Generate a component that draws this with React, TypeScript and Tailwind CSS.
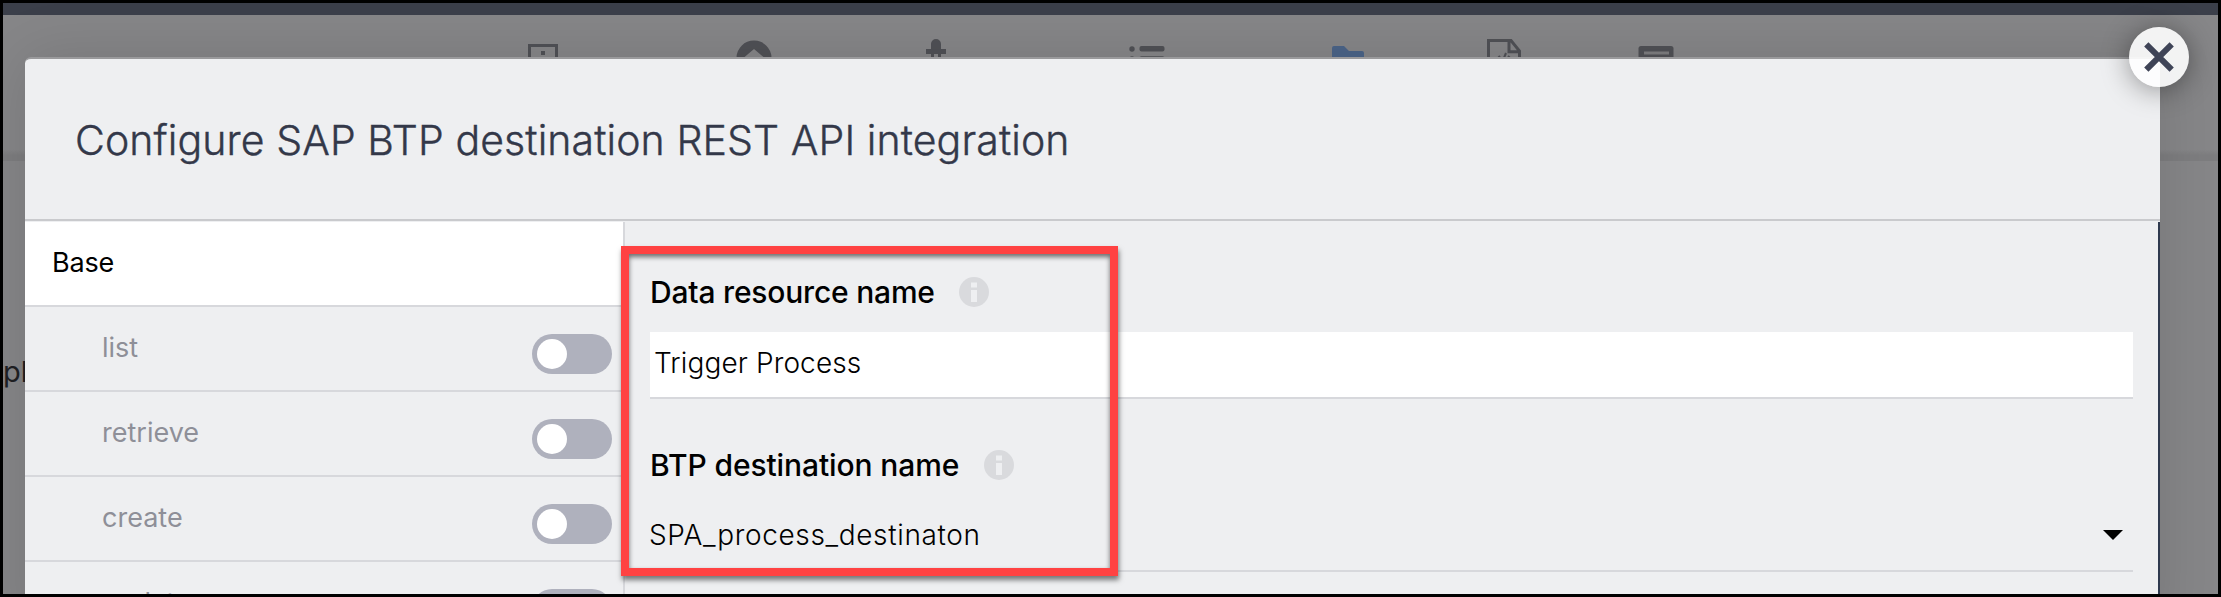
import React from "react";

function Toggle() {
  return (
    <span className="mt-[11px] flex h-10 w-20 shrink-0 items-center rounded-full bg-[#afb1bd] pl-[5px]">
      <span className="h-[30px] w-[30px] rounded-full bg-white" />
    </span>
  );
}

function InfoIcon() {
  return (
    <svg width="30" height="30" viewBox="0 0 30 30" className="-mt-px shrink-0">
      <circle cx="15" cy="15" r="15" fill="#d9dadd" />
      <rect x="12" y="5.5" width="6" height="5" fill="#eeeff1" />
      <rect x="12" y="13" width="6" height="12" fill="#eeeff1" />
    </svg>
  );
}

function ToolbarIcons() {
  return (
    <svg width="1160" height="36" viewBox="525 30 1160 36" className="ml-[522px] mt-[15px] shrink-0" fill="#505156">
      <path d="M529.5 66V45.5H556.5V66" fill="none" stroke="#505156" strokeWidth="3" />
      <rect x="541" y="51" width="4" height="4" />
      <path d="M736.5 58a17.5 17.5 0 0 1 35 0v2h-4.5L754 49l-13 11h-4.5z" />
      <path d="M931 49v-5a5 5 0 0 1 10 0v5h5v5h-5v10h-3V54h-4v10h-3V54h-5v-5z" />
      <circle cx="1132" cy="49" r="2.7" />
      <rect x="1139.5" y="46" width="25" height="5.6" rx="2" />
      <circle cx="1132" cy="59" r="2.7" />
      <rect x="1139.5" y="56.3" width="25" height="5.6" rx="2" />
      <path d="M1332 66V48q0-2 2-2h10l5 5h13q2 0 2 2v13z" fill="#4b6488" />
      <path d="M1488.5 66V40.5H1511L1519.5 51V66M1509 40.5V51.8H1520" fill="none" stroke="#505156" strokeWidth="3" />
      <path d="M1497 59l3-3M1503.5 59l2.5-6M1508 56l2 2" fill="none" stroke="#505156" strokeWidth="2" />
      <path d="M1638.5 66V48.5q0-2.5 2.5-2.5h30q2.5 0 2.5 2.5V66z" />
      <rect x="1644" y="51.5" width="25" height="3" fill="#7e7e80" />
    </svg>
  );
}

const operations = ["list", "retrieve", "create", "update"];

export default function App() {
  return (
    <div className="relative flex h-[597px] w-[2221px] flex-col overflow-hidden border-[3px] border-black bg-[#868688] font-['Inter',sans-serif] text-black">
      <div className="h-3 shrink-0 bg-[#3b3f4a]" />
      <div className="flex h-[146px] shrink-0 flex-col bg-[linear-gradient(to_bottom,transparent_92%,#7d7d7f_96%)]">
        <ToolbarIcons />
      </div>
      <div className="pt-[191px]">
        <div className="text-[29px] leading-[40px] text-[#1f2023]">pl</div>
      </div>

      <section className="absolute left-[22px] top-[54px] flex h-[580px] w-[2135px] flex-col overflow-hidden rounded-t-md border-t-2 border-[#9a9a9c] bg-[#eeeff1] shadow-[0_0_60px_rgba(0,0,0,0.13)]">
        <header className="flex h-[162px] shrink-0 items-center border-b-2 border-[#c9cacd] pl-[50px] pt-1">
          <h1 className="text-[41px] font-light tracking-[0.1px] text-[#333849] [-webkit-text-stroke:0.4px_#333849]">
            Configure SAP BTP destination REST API integration
          </h1>
        </header>
        <div className="mt-px flex grow">
          <nav className="flex w-[600px] shrink-0 flex-col border-r-2 border-[#d7d8dc] text-[27px]">
            <div className="flex h-[85px] shrink-0 items-center border-b-2 border-[#d7d8dc] bg-white pl-[27px] font-[370] tracking-[-0.2px]">
              Base
            </div>
            {operations.map((name) => (
              <div
                key={name}
                className="flex h-[85px] shrink-0 items-center justify-between border-b-2 border-[#d7d8dc] pl-[77px] pr-[11px] text-[#8e8f98]"
              >
                <span className="-mt-px">{name}</span>
                <Toggle />
              </div>
            ))}
          </nav>
          <main className="flex grow flex-col border-r-2 border-[#2f3a4f] px-[25px] pt-[50px]">
            <label className="flex h-10 items-center gap-6 text-[30px] font-medium tracking-[-0.2px]">
              Data resource name
              <InfoIcon />
            </label>
            <div className="mt-5 flex h-[67px] items-center border-b-2 border-[#d7d8dc] bg-white pb-[3px] pl-1 text-[28px] font-[350] tracking-[0.12px]">
              Trigger Process
            </div>
            <label className="mt-[46px] flex h-10 items-center gap-[25px] text-[30px] font-medium tracking-[-0.1px]">
              BTP destination name
              <InfoIcon />
            </label>
            <div className="mt-[15px] flex h-[72px] items-center justify-between border-b-2 border-[#d7d8dc] pr-2.5 text-[28px] font-[350] tracking-[0.65px]">
              <span className="-ml-px">SPA_process_destinaton</span>
              <svg width="20" height="10" viewBox="0 0 20 10">
                <path d="M0 0H20L10 10z" />
              </svg>
            </div>
          </main>
        </div>
      </section>

      <div className="absolute left-[618px] top-[243px] h-[330px] w-[497px] border-8 border-[#ff4242] shadow-[1px_4px_5px_rgba(0,0,0,0.5),inset_0_3px_5px_rgba(0,0,0,0.55)]" />

      <button
        aria-label="Close"
        className="absolute left-[2126px] top-6 flex h-[60px] w-[60px] items-center justify-center rounded-full bg-white/90 shadow-[0_3px_28px_rgba(0,0,0,0.4)]"
      >
        <svg width="30" height="30" viewBox="0 0 30 30" stroke="#3f4457" strokeWidth="6">
          <path d="M2.3 2.3L27.7 27.7M27.7 2.3L2.3 27.7" />
        </svg>
      </button>
    </div>
  );
}
